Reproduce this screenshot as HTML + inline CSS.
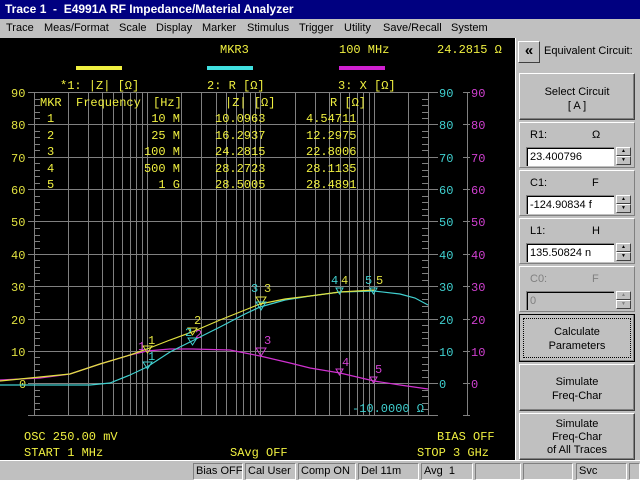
<!DOCTYPE html>
<html><head><meta charset="utf-8"><style>
*{margin:0;padding:0;box-sizing:border-box}
body{width:640px;height:480px;overflow:hidden;background:#c0c0c0;font-family:"Liberation Sans",sans-serif;position:relative;white-space:nowrap}
#title{position:absolute;left:0;top:0;width:640px;height:19px;background:#000080;color:#fff;font-weight:bold;font-size:12px;line-height:19px;padding-left:5px}
#menu{position:absolute;left:0;top:19px;width:640px;height:19px;font-size:11px;line-height:19px}
#menu span{position:absolute;top:0}
#chart{position:absolute;left:0;top:38px;width:515px;height:422px;background:#000}
.panel{position:absolute;left:515px;top:38px;width:125px;height:422px;background:#c0c0c0;border-left:1px solid #fff}
.btn{position:absolute;left:3px;width:116px;background:#c0c0c0;border-top:1px solid #fff;border-left:1px solid #fff;border-right:1px solid #404040;border-bottom:1px solid #404040;box-shadow:inset -1px -1px 0 #808080;font-size:11px;text-align:center;color:#000}
.grp{position:absolute;left:3px;width:116px;border-top:1px solid #fff;border-left:1px solid #fff;border-right:1px solid #808080;border-bottom:1px solid #808080;font-size:11px}
.grp .l{position:absolute;left:10px;top:6px}
.grp .u{position:absolute;left:72px;top:6px}
.grp .e{position:absolute;left:6px;top:24px;width:88px;height:19px;background:#fff;border-top:1px solid #808080;border-left:1px solid #808080;box-shadow:inset 1px 1px 0 #000;padding:2px 3px;font-size:11px;line-height:14px}
.grp .s{position:absolute;left:96px;top:24px;width:15px;height:19px}
.grp .s div{height:9px;border-top:1px solid #fff;border-left:1px solid #fff;border-right:1px solid #404040;border-bottom:1px solid #404040;font-size:5px;line-height:7px;text-align:center}
#status{position:absolute;left:0;top:460px;width:640px;height:20px;background:#c0c0c0;border-top:1px solid #fff;font-size:11px}
#status div{position:absolute;top:2px;height:17px;border-top:1px solid #808080;border-left:1px solid #808080;border-right:1px solid #fff;border-bottom:1px solid #fff;padding-left:2px;line-height:15px;overflow:hidden}
svg text{font-family:"Liberation Mono",monospace;font-size:12px}
</style></head><body>
<div id="title">Trace 1 &nbsp;- &nbsp;E4991A RF Impedance/Material Analyzer</div>
<div id="menu">
<span style="left:6px">Trace</span><span style="left:44px">Meas/Format</span><span style="left:119px">Scale</span><span style="left:156px">Display</span><span style="left:202px">Marker</span><span style="left:247px">Stimulus</span><span style="left:299px">Trigger</span><span style="left:344px">Utility</span><span style="left:383px">Save/Recall</span><span style="left:451px">System</span>
</div>
<div id="chart">
<svg width="515" height="422" viewBox="0 38 515 422" xmlns="http://www.w3.org/2000/svg">
<g stroke="#808080" stroke-width="1" fill="none" shape-rendering="crispEdges">
<path d="M34.5 92V416M68.5 92V416M88.5 92V416M102.5 92V416M113.5 92V416M122.5 92V416M130.5 92V416M136.5 92V416M142.5 92V416M147.5 92V416M181.5 92V416M201.5 92V416M216.5 92V416M226.5 92V416M236.5 92V416M243.5 92V416M250.5 92V416M255.5 92V416M260.5 92V416M295.5 92V416M315.5 92V416M329.5 92V416M340.5 92V416M349.5 92V416M357.5 92V416M363.5 92V416M369.5 92V416M374.5 92V416M408.5 92V416M428.5 92V416"/>
<path d="M28 92.5H438M28 124.5H438M28 157.5H438M28 189.5H438M28 221.5H438M28 254.5H438M28 286.5H438M28 319.5H438M28 351.5H438M28 383.5H438M28 415.5H438"/>
<path d="M34 99.5h6M34 105.5h6M34 112.5h6M34 118.5h6M34 131.5h6M34 137.5h6M34 144.5h6M34 150.5h6M34 163.5h6M34 170.5h6M34 176.5h6M34 183.5h6M34 196.5h6M34 202.5h6M34 209.5h6M34 215.5h6M34 228.5h6M34 235.5h6M34 241.5h6M34 248.5h6M34 260.5h6M34 267.5h6M34 273.5h6M34 280.5h6M34 293.5h6M34 299.5h6M34 306.5h6M34 312.5h6M34 325.5h6M34 332.5h6M34 338.5h6M34 345.5h6M34 357.5h6M34 364.5h6M34 370.5h6M34 377.5h6M34 390.5h6M34 396.5h6M34 403.5h6M34 409.5h6"/>
<path d="M422 99.5h6M422 105.5h6M422 112.5h6M422 118.5h6M422 131.5h6M422 137.5h6M422 144.5h6M422 150.5h6M422 163.5h6M422 170.5h6M422 176.5h6M422 183.5h6M422 196.5h6M422 202.5h6M422 209.5h6M422 215.5h6M422 228.5h6M422 235.5h6M422 241.5h6M422 248.5h6M422 260.5h6M422 267.5h6M422 273.5h6M422 280.5h6M422 293.5h6M422 299.5h6M422 306.5h6M422 312.5h6M422 325.5h6M422 332.5h6M422 338.5h6M422 345.5h6M422 357.5h6M422 364.5h6M422 370.5h6M422 377.5h6M422 390.5h6M422 396.5h6M422 403.5h6M422 409.5h6"/>
<path d="M467.5 92V416M463 92.5h7M463 124.5h7M463 157.5h7M463 189.5h7M463 221.5h7M463 254.5h7M463 286.5h7M463 319.5h7M463 351.5h7M463 383.5h7M463 415.5h7"/>
</g>
<g fill="#e0e040">
<text x="11" y="97">90</text><text x="11" y="129">80</text><text x="11" y="162">70</text><text x="11" y="194">60</text><text x="11" y="226">50</text><text x="11" y="259">40</text><text x="11" y="291">30</text><text x="11" y="324">20</text><text x="11" y="356">10</text><text x="19" y="388">0</text>
</g>
<g fill="#40d0d0">
<text x="439" y="97">90</text><text x="439" y="129">80</text><text x="439" y="162">70</text><text x="439" y="194">60</text><text x="439" y="226">50</text><text x="439" y="259">40</text><text x="439" y="291">30</text><text x="439" y="324">20</text><text x="439" y="356">10</text><text x="439" y="388">0</text>
<text x="352" y="412">-10.0000 Ω</text>
</g>
<g fill="#d040d0">
<text x="471" y="97">90</text><text x="471" y="129">80</text><text x="471" y="162">70</text><text x="471" y="194">60</text><text x="471" y="226">50</text><text x="471" y="259">40</text><text x="471" y="291">30</text><text x="471" y="324">20</text><text x="471" y="356">10</text><text x="471" y="388">0</text>
</g>
<rect x="76" y="66" width="46" height="4" fill="#f0f040"/>
<rect x="207" y="66" width="46" height="4" fill="#40e0e0"/>
<rect x="339" y="66" width="46" height="4" fill="#d020d0"/>
<g fill="#f0f040">
<text x="220" y="53">MKR3</text><text x="339" y="53">100 MHz</text><text x="437" y="53">24.2815 Ω</text>
<text x="60" y="89">*1: |Z| [Ω]</text><text x="207" y="89">2: R [Ω]</text><text x="338" y="89">3: X [Ω]</text>
<text x="40" y="106">MKR</text><text x="76" y="106">Frequency</text><text x="153" y="106">[Hz]</text><text x="225" y="106">|Z| [Ω]</text><text x="330" y="106">R [Ω]</text>
<text x="47" y="122">1</text><text x="47" y="139">2</text><text x="47" y="155">3</text><text x="47" y="172">4</text><text x="47" y="188">5</text>
<text x="180" y="122" text-anchor="end">10 M</text><text x="180" y="139" text-anchor="end">25 M</text><text x="180" y="155" text-anchor="end">100 M</text><text x="180" y="172" text-anchor="end">500 M</text><text x="180" y="188" text-anchor="end">1 G</text>
<text x="215" y="122">10.0963</text><text x="215" y="139">16.2937</text><text x="215" y="155">24.2815</text><text x="215" y="172">28.2723</text><text x="215" y="188">28.5005</text>
<text x="306" y="122">4.54711</text><text x="306" y="139">12.2975</text><text x="306" y="155">22.8006</text><text x="306" y="172">28.1135</text><text x="306" y="188">28.4891</text>
<text x="24" y="440">OSC 250.00 mV</text><text x="24" y="456">START  1 MHz</text><text x="230" y="456">SAvg OFF</text><text x="437" y="440">BIAS OFF</text><text x="417" y="456">STOP  3 GHz</text>
</g>
<g fill="none" stroke-width="1.2">
<polyline stroke="#d030d0" points="0,380 40,378 70,374 100,364 130,355 147,351 170,349 192,349 230,350 260,356 290,363 310,368 340,373 374,381 400,385 428,389"/>
<polyline stroke="#40d0d0" points="0,385 90,385 110,383 130,375 147,367 170,352 192,341 220,327 245,314 260,307 285,300 310,296 340,292 374,291 400,294 415,298 428,305"/>
<polyline stroke="#e0e040" points="0,381 70,374 100,364 130,355 147,349 170,340 192,332 220,320 245,310 260,304 285,299 310,296 340,292 374,290"/>
</g>
<g font-size="11">
<path d="M143 346h9l-4.5 7z" stroke="#e0e040" fill="none"/><text x="148" y="344" fill="#e0e040">1</text>
<path d="M143 362h9l-4.5 7z" stroke="#40d0d0" fill="none"/><text x="148" y="360" fill="#40d0d0">1</text>
<text x="138" y="350" fill="#d040d0">1</text>
<path d="M188 328h9l-4.5 7z" stroke="#e0e040" fill="none"/><text x="194" y="324" fill="#e0e040">2</text>
<path d="M188 338h9l-4.5 7z" stroke="#40d0d0" fill="none"/><text x="185" y="336" fill="#40d0d0">2</text><text x="195" y="338" fill="#d040d0">2</text>
<path d="M256 297h10l-5 8z" stroke="#e0e040" fill="none"/><text x="264" y="292" fill="#e0e040">3</text>
<path d="M256 302h10l-5 8z" stroke="#40d0d0" fill="none"/><text x="251" y="292" fill="#40d0d0">3</text>
<path d="M256 348h10l-5 8z" stroke="#d040d0" fill="none"/><text x="264" y="344" fill="#d040d0">3</text>
<path d="M336 288h7l-3.5 6z" stroke="#40d0d0" fill="none"/><text x="331" y="284" fill="#40d0d0">4</text><text x="341" y="284" fill="#e0e040">4</text>
<path d="M336 369h7l-3.5 6z" stroke="#d040d0" fill="none"/><text x="342" y="366" fill="#d040d0">4</text>
<path d="M370 288h7l-3.5 6z" stroke="#40d0d0" fill="none"/><text x="365" y="284" fill="#40d0d0">5</text><text x="376" y="284" fill="#e0e040">5</text>
<path d="M370 377h7l-3.5 6z" stroke="#d040d0" fill="none"/><text x="375" y="373" fill="#d040d0">5</text>
</g>
</svg>
</div>
<div class="panel">
<div style="position:absolute;left:2px;top:3px;width:22px;height:22px;border-top:1px solid #fff;border-left:1px solid #fff;border-right:1px solid #404040;border-bottom:1px solid #404040;font-size:15px;font-weight:bold;text-align:center;line-height:18px">«</div>
<div style="position:absolute;left:28px;top:7px;font-size:11px">Equivalent Circuit:</div>
<div class="btn" style="top:35px;height:47px;padding-top:11px;line-height:14px">Select Circuit<br>[ A ]</div>
<div class="grp" style="top:84px;height:46px"><span class="l">R1:</span><span class="u">Ω</span><div class="e">23.400796</div><div class="s"><div>▲</div><div>▼</div></div></div>
<div class="grp" style="top:132px;height:46px"><span class="l">C1:</span><span class="u">F</span><div class="e">-124.90834 f</div><div class="s"><div>▲</div><div>▼</div></div></div>
<div class="grp" style="top:180px;height:46px"><span class="l">L1:</span><span class="u">H</span><div class="e">135.50824 n</div><div class="s"><div>▲</div><div>▼</div></div></div>
<div class="grp" style="top:228px;height:46px;color:#808080"><span class="l">C0:</span><span class="u">F</span><div class="e" style="background:#c0c0c0;color:#808080">0</div><div class="s"><div>▲</div><div>▼</div></div></div>
<div class="btn" style="top:276px;height:48px;border:1px solid #000;padding-top:10px;line-height:14px"><div style="position:absolute;left:3px;top:3px;right:3px;bottom:3px;border:1px dotted #000"></div>Calculate<br>Parameters</div>
<div class="btn" style="top:326px;height:47px;padding-top:10px;line-height:14px">Simulate<br>Freq-Char</div>
<div class="btn" style="top:375px;height:47px;padding-top:4px;line-height:13px">Simulate<br>Freq-Char<br>of All Traces</div>
</div>
<div id="status">
<div style="left:193px;width:50px">Bias OFF</div><div style="left:245px;width:51px">Cal User</div><div style="left:298px;width:58px">Comp ON</div><div style="left:358px;width:61px">Del 11m</div><div style="left:421px;width:52px">Avg &nbsp;1</div><div style="left:475px;width:46px"></div><div style="left:523px;width:50px"></div><div style="left:576px;width:51px">Svc</div><div style="left:629px;width:11px"></div>
</div>
</body></html>
